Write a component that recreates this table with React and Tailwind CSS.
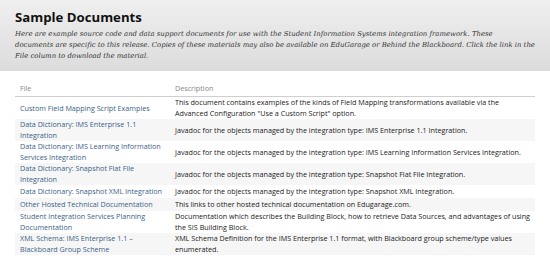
const DOCS = [
  {
    file: ['Custom Field Mapping Script Examples'],
    desc: [
      'This document contains examples of the kinds of Field Mapping transformations available via the',
      'Advanced Configuration "Use a Custom Script" option.',
    ],
  },
  {
    file: ['Data Dictionary: IMS Enterprise 1.1', 'Integration'],
    desc: ['Javadoc for the objects managed by the integration type: IMS Enterprise 1.1 Integration.'],
  },
  {
    file: ['Data Dictionary: IMS Learning Information', 'Services Integration'],
    desc: ['Javadoc for the objects managed by the integration type: IMS Learning Information Services Integration.'],
  },
  {
    file: ['Data Dictionary: Snapshot Flat File', 'Integration'],
    desc: ['Javadoc for the objects managed by the integration type: Snapshot Flat File Integration.'],
  },
  {
    file: ['Data Dictionary: Snapshot XML Integration'],
    desc: ['Javadoc for the objects managed by the integration type: Snapshot XML Integration.'],
  },
  {
    file: ['Other Hosted Technical Documentation'],
    desc: ['This links to other hosted technical documentation on Edugarage.com.'],
  },
  {
    file: ['Student Integration Services Planning', 'Documentation'],
    desc: [
      'Documentation which describes the Building Block, how to retrieve Data Sources, and advantages of using',
      'the SIS Building Block.',
    ],
  },
  {
    file: ['XML Schema: IMS Enterprise 1.1 –', 'Blackboard Group Scheme'],
    desc: [
      'XML Schema Definition for the IMS Enterprise 1.1 format, with Blackboard group scheme/type values',
      'enumerated.',
    ],
  },
]

export default function App() {
  return (
    <div className="w-[550px] h-[260px] bg-white overflow-hidden font-['Open_Sans',sans-serif]">

      {/* Page header */}
      <div className="h-[71px] bg-gradient-to-b from-[#efefef] to-[#dcdcdc] px-[15px] pt-[7px]">
        <h1 className="text-[13.2px] leading-[20px] font-bold text-[#111]">Sample Documents</h1>
        <p className="mt-[2px] text-[6.9px] leading-[10.8px] italic text-[#333] font-['DejaVu_Serif',serif] whitespace-nowrap">
          Here are example source code and data support documents for use with the Student Information Systems integration framework. These
          <br />
          documents are specific to this release. Copies of these materials may also be available on EduGarage or Behind the Blackboard. Click the link in the
          <br />
          File column to download the material.
        </p>
      </div>

      {/* Documents table */}
      <div className="mx-[15px] mt-[12px] w-[520px] text-[7.2px] leading-[10.8px]">
        <div className="flex h-[14px] border-b border-[#cfcfcf] text-[#888]">
          <div className="w-[160px] pl-[5px]">File</div>
          <div className="flex-1">Description</div>
        </div>
        {DOCS.map((d, i) => {
          const tall = d.file.length > 1 || d.desc.length > 1
          return (
            <div
              key={i}
              className={`flex items-center ${tall ? 'h-[22px]' : 'h-[13px]'} ${i % 2 === 1 ? 'bg-[#f6f6f6]' : 'bg-white'}`}
            >
              <div className="w-[160px] pl-[5px] text-[#3a6389]">
                {d.file.map((l, j) => <div key={j}>{l}</div>)}
              </div>
              <div className="flex-1 text-[#222]">
                {d.desc.map((l, j) => <div key={j}>{l}</div>)}
              </div>
            </div>
          )
        })}
      </div>
    </div>
  )
}
